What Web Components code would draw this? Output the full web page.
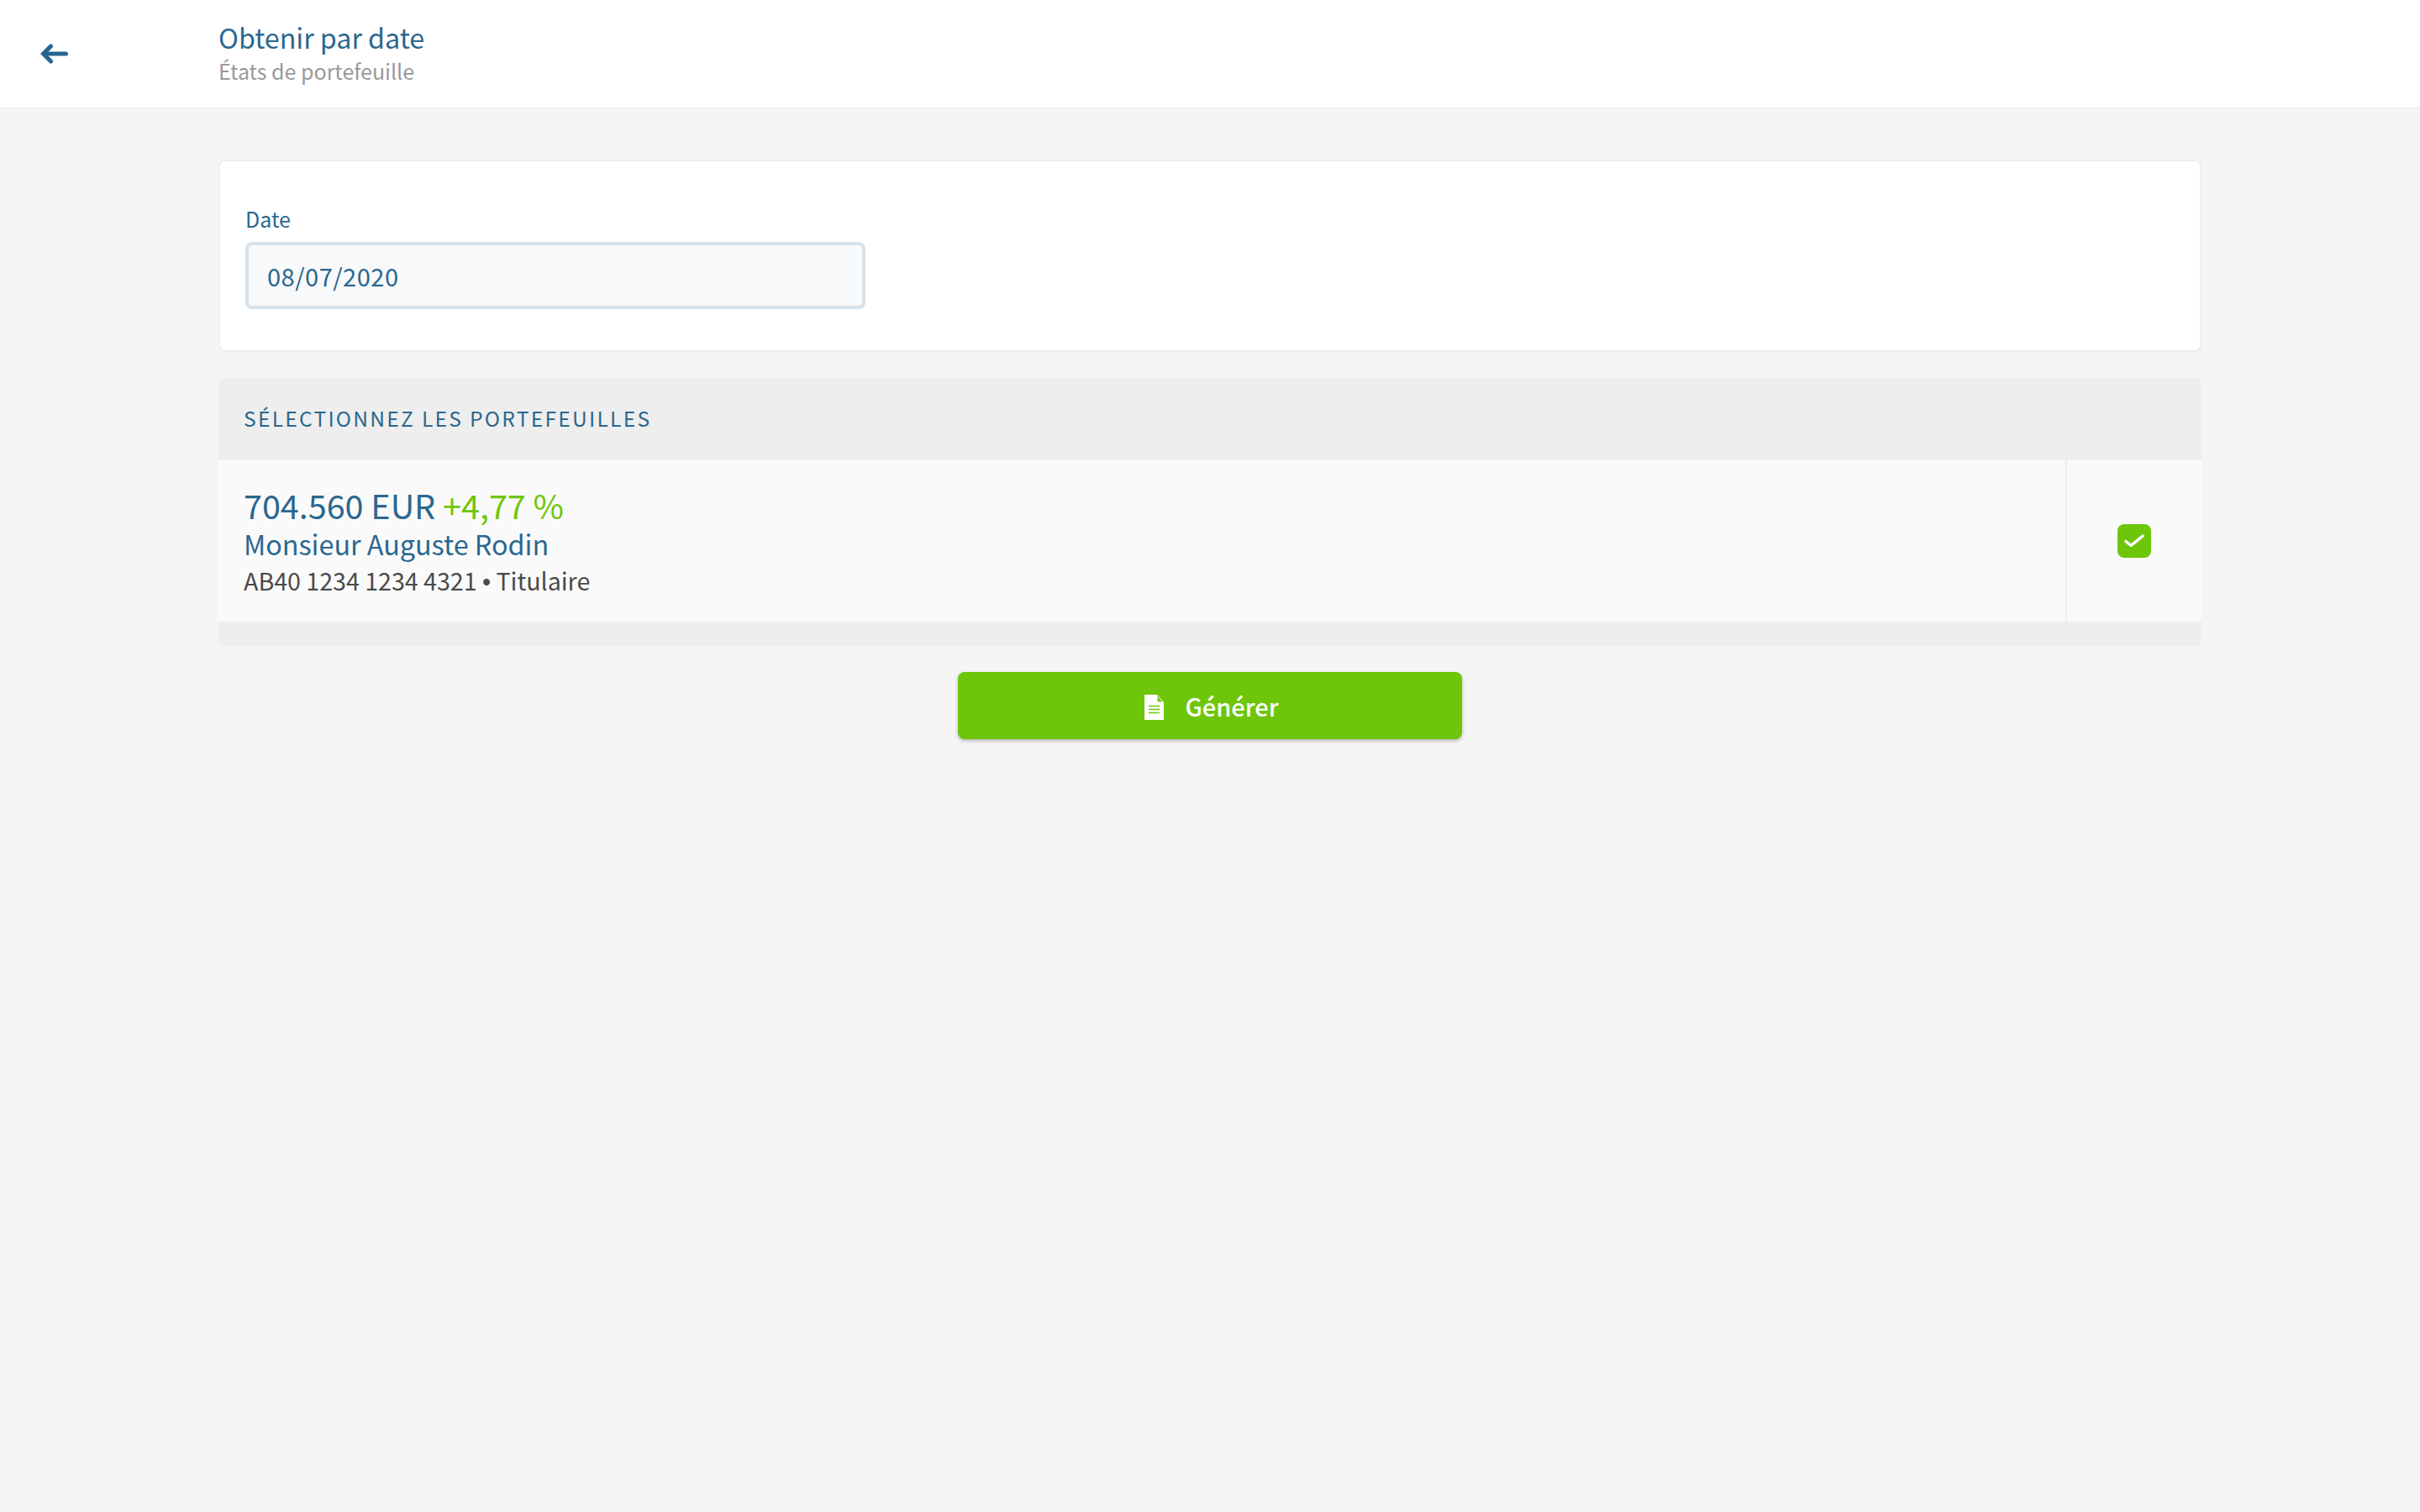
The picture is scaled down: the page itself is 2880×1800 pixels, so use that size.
<!DOCTYPE html>
<html lang="fr">
<head>
<meta charset="utf-8">
<title>Obtenir par date</title>
<style>
  html, body {
    margin: 0;
    height: 100%;
    background: #f5f5f5;
    color: #2a678f;
    font-family: "Noto Sans CJK SC", "Open Sans", sans-serif;
  }
  body { min-height: 1800px; }
  main {
    display: flex;
    flex-direction: column;
    gap: 30px;
    padding: 60px 260px 0;
  }
</style>
</head>
<body>
<app-header heading="Obtenir par date" sub="États de portefeuille"></app-header>
<main>
  <date-card label="Date" value="08/07/2020"></date-card>
  <portfolio-list heading="Sélectionnez les portefeuilles">
    <portfolio-row amount="704.560 EUR" perf="+4,77 %" owner="Monsieur Auguste Rodin" account="AB40 1234 1234 4321" role="Titulaire"></portfolio-row>
  </portfolio-list>
  <generate-button>Générer</generate-button>
</main>

<template id="header-tpl">
  <style>
    :host {
      display: flex;
      align-items: center;
      box-sizing: border-box;
      height: 130px;
      background: #fff;
      border-bottom: 2px solid #eeeeee;
    }
    .back { width: 260px; display: flex; padding-left: 48px; box-sizing: border-box; }
    svg { width: 34px; height: 24px; display: block; }
    h1 { margin: 0; font-size: 32.200px; line-height: 40px; font-weight: 400; color: #2a678f; }
    p { margin: 0; font-size: 25px; line-height: 40px; color: #999; }
  </style>
  <div class="back">
    <svg viewBox="0 0 34 24" fill="none" stroke="#26648e" stroke-width="5" stroke-linecap="round" stroke-linejoin="miter">
      <path d="M30.500 12H5"/><path d="M12.500 3L3.500 12l9 9"/>
    </svg>
  </div>
  <div>
    <h1></h1>
    <p></p>
  </div>
</template>

<template id="card-tpl">
  <style>
    :host {
      display: block;
      box-sizing: border-box;
      height: 229px;
      margin-bottom: 1px;
      padding: 48px 30px 0;
      background: #fff;
      border: 2px solid #eeeeee;
      border-radius: 8px;
    }
    label { display: block; font-size: 25px; line-height: 40px; color: #2a678f; }
    .field {
      box-sizing: border-box;
      width: 738px;
      height: 80px;
      margin-top: 8px;
      padding: 0 22px;
      display: flex;
      align-items: center;
      background: #f7f9fa;
      border: 4px solid #d8e2ea;
      border-radius: 8px;
      font-size: 29px;
      letter-spacing: 0.5px;
      color: #2a678f;
    }
  </style>
  <label></label>
  <div class="field"></div>
</template>

<template id="list-tpl">
  <style>
    :host {
      display: block;
      background: #eeeeee;
      border-radius: 8px;
      padding-bottom: 30px;
    }
    h2 {
      box-sizing: border-box;
      margin: 0;
      height: 98px;
      padding: 0 30px 3px;
      display: flex;
      align-items: center;
      font-size: 24.500px;
      font-weight: 400;
      letter-spacing: 2.300px;
      text-transform: uppercase;
      color: #2a678f;
    }
  </style>
  <h2></h2>
  <slot></slot>
</template>

<template id="row-tpl">
  <style>
    :host {
      display: flex;
      height: 192px;
      background: #fafafa;
    }
    .info {
      flex: 1;
      padding: 5px 30px 0;
      display: flex;
      flex-direction: column;
      justify-content: center;
      border-right: 2px solid #eeeeee;
    }
    .top { font-size: 39.500px; line-height: 43px; margin-bottom: 3px; color: #2a678f; }
    .top span { color: #6ec60b; }
    .owner { font-size: 32.300px; line-height: 44px; color: #2a678f; }
    .account { font-size: 28.600px; line-height: 44px; color: #4a4a4a; }
    .dot { font-family: "Liberation Sans", sans-serif; }
    .check {
      width: 160px;
      display: flex;
      align-items: center;
      justify-content: center;
    }
    .box {
      width: 40px;
      height: 40px;
      border-radius: 8px;
      background: #6ec60b;
      display: block;
    }
  </style>
  <div class="info">
    <div class="top"><b style="font-weight:400"></b> <span></span></div>
    <div class="owner"></div>
    <div class="account"><span class="acc"></span> <span class="dot">•</span> <span class="role"></span></div>
  </div>
  <div class="check">
    <svg class="box" viewBox="0 0 40 40" fill="none" stroke="#fff" stroke-width="3.500" stroke-linecap="round" stroke-linejoin="round">
      <path d="M10 20.500l6 5L30 14"/>
    </svg>
  </div>
</template>

<template id="button-tpl">
  <style>
    :host {
      display: flex;
      box-sizing: border-box;
      align-self: center;
      align-items: center;
      justify-content: center;
      gap: 25px;
      width: 600px;
      height: 80px;
      padding-left: 4px;
      background: #6ec60b;
      border-radius: 8px;
      box-shadow: 0 2px 4px rgba(0, 0, 0, 0.25);
      color: #fff;
      font-size: 29px;
      font-weight: 500;
      cursor: pointer;
    }
    svg { width: 23px; height: 30px; display: block; margin-top: 4px; }
  </style>
  <svg viewBox="0 0 23 30">
    <path fill="#fff" d="M0 0H15L23 9V30H0Z"/>
    <path fill="#6ec60b" d="M15.500 1.500L21.500 8.500H15.500Z"/>
    <path fill="none" stroke="#6ec60b" stroke-width="1.400" d="M5 13.500H18M5 17.500H18M5 21.500H18"/>
  </svg>
  <slot></slot>
</template>

<script>
function fromTemplate(el, id) {
  el.attachShadow({ mode: "open" });
  el.shadowRoot.appendChild(document.getElementById(id).content.cloneNode(true));
  return el.shadowRoot;
}

class AppHeader extends HTMLElement {
  constructor() {
    super();
    const root = fromTemplate(this, "header-tpl");
    root.querySelector("h1").textContent = this.getAttribute("heading");
    root.querySelector("p").textContent = this.getAttribute("sub");
  }
}

class DateCard extends HTMLElement {
  constructor() {
    super();
    const root = fromTemplate(this, "card-tpl");
    root.querySelector("label").textContent = this.getAttribute("label");
    root.querySelector(".field").textContent = this.getAttribute("value");
  }
}

class PortfolioList extends HTMLElement {
  constructor() {
    super();
    const root = fromTemplate(this, "list-tpl");
    root.querySelector("h2").textContent = this.getAttribute("heading");
  }
}

class PortfolioRow extends HTMLElement {
  constructor() {
    super();
    const root = fromTemplate(this, "row-tpl");
    root.querySelector(".top b").textContent = this.getAttribute("amount");
    root.querySelector(".top span").textContent = this.getAttribute("perf");
    root.querySelector(".owner").textContent = this.getAttribute("owner");
    root.querySelector(".acc").textContent = this.getAttribute("account");
    root.querySelector(".role").textContent = this.getAttribute("role");
  }
}

class GenerateButton extends HTMLElement {
  constructor() {
    super();
    fromTemplate(this, "button-tpl");
  }
}

customElements.define("app-header", AppHeader);
customElements.define("date-card", DateCard);
customElements.define("portfolio-list", PortfolioList);
customElements.define("portfolio-row", PortfolioRow);
customElements.define("generate-button", GenerateButton);
</script>
</body>
</html>
